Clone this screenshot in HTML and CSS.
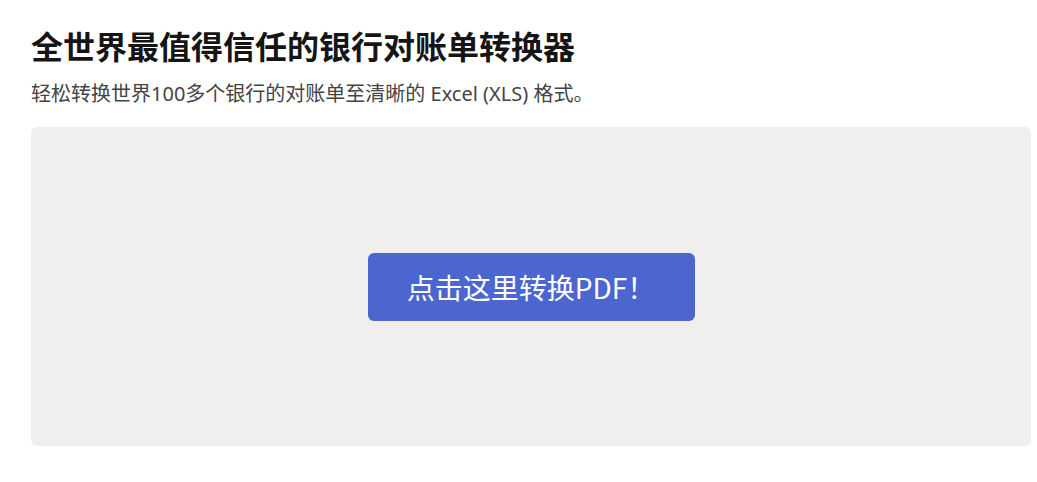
FILE: index.html
```html
<!DOCTYPE html>
<html lang="zh-CN">
<head>
  <meta charset="UTF-8">
  <title>银行对账单转换器</title>
  <link rel="stylesheet" href="styles.css">
</head>
<body>
  <div class="page">
    <h1 class="title">全世界最值得信任的银行对账单转换器</h1>
    <p class="subtitle">轻松转换世界100多个银行的对账单至清晰的 Excel (XLS) 格式。</p>
    <div class="dropzone">
      <button class="convert-btn">点击这里转换PDF！</button>
    </div>
  </div>
</body>
</html>
```

FILE: styles.css
```css
body {
  margin: 0;
  background: #fff;
  font-family: "Inter", "Noto Sans CJK SC", sans-serif;
  color: #1b1b1b;
}
.page {
  padding: 24px 6px 0 31px;
}
.title {
  margin: 0;
  font-size: 32px;
  line-height: 42px;
  font-weight: 700;
  font-family: "Noto Sans CJK SC", sans-serif;
  color: #151515;
}
.subtitle {
  margin: 14px 0 0;
  font-size: 20px;
  line-height: 28px;
  color: #444;
  font-family: "Noto Sans", "Noto Sans CJK SC", sans-serif;
}
.dropzone {
  margin-top: 19px;
  width: 1000px;
  height: 319px;
  background: #f0efee;
  border-radius: 6px;
  display: flex;
  align-items: center;
  justify-content: center;
}
.convert-btn {
  width: 327px;
  height: 68px;
  border: 0;
  border-radius: 6px;
  background: #4b66cf;
  color: #fff;
  font-size: 28px;
  font-family: "Noto Sans CJK SC", sans-serif;
  cursor: pointer;
}
```
